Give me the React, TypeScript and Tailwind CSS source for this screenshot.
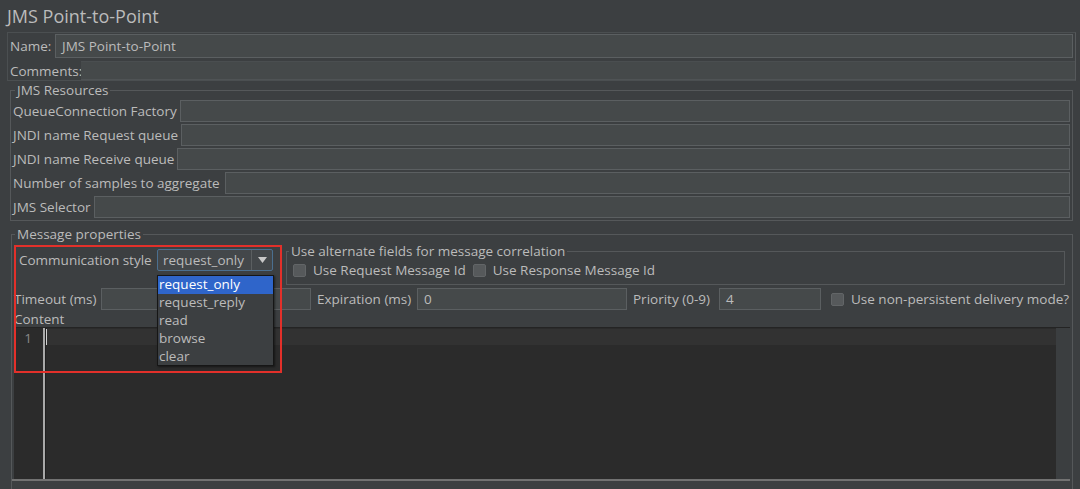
import React from 'react'

const Field = ({ value = '', className = '' }: { value?: string; className?: string }) => (
  <div className={`h-[22px] bg-[#45494a] border border-[#5b5f61] pl-[6px] flex items-center text-[#bbbbbb] ${className}`}>
    {value}
  </div>
)

const Check = ({ label, className = '' }: { label: string; className?: string }) => (
  <div className={`flex items-center ${className}`}>
    <div className="w-[13px] h-[13px] rounded-[2px] bg-[#56595b] border border-[#626567]" />
    <span className="ml-[7px]">{label}</span>
  </div>
)

const resources = [
  { label: 'QueueConnection Factory', w: 'w-[167px]' },
  { label: 'JNDI name Request queue', w: 'w-[168px]' },
  { label: 'JNDI name Receive queue', w: 'w-[164px]' },
  { label: 'Number of samples to aggregate', w: 'w-[212px]' },
  { label: 'JMS Selector', w: 'w-[81px]' },
]

const styles = ['request_only', 'request_reply', 'read', 'browse', 'clear']

export default function App() {
  return (
    <div className="relative w-[1080px] h-[489px] overflow-hidden bg-[#3c3f41] text-[#bbbbbb] text-[13.5px] leading-[16px] font-['Open_Sans',sans-serif]">
      <div className="h-[32px] pl-[7px] pt-[5px] text-[18px] leading-[22px]">JMS Point-to-Point</div>

      {/* name / comments */}
      <div className="ml-[7px] w-[1069px] h-[49px] border border-[#4b4f51] border-r-[#56595b]">
        <div className="flex items-center mt-[1px] pr-[2px]">
          <span className="w-[47px] pl-[2px]">Name:</span>
          <Field value="JMS Point-to-Point" className="flex-1 h-[24px]" />
        </div>
        <div className="flex items-center mt-[3px]">
          <span className="w-[73px] pl-[2px]">Comments:</span>
          <div className="flex-1 h-[19px] bg-[#45494a] border-t border-b border-t-[#4a4e50] border-b-[#4f5355]" />
        </div>
      </div>

      {/* JMS Resources */}
      <fieldset className="ml-[10px] mt-[1px] w-[1063px] border border-[#55585a] px-[2px] pb-[2px]">
        <legend className="ml-[2px] px-[2px] leading-[16px]">JMS Resources</legend>
        <div className="flex flex-col gap-[2px] mt-[2px]">
          {resources.map((r) => (
            <div key={r.label} className="flex items-center">
              <span className={`${r.w} whitespace-nowrap`}>{r.label}</span>
              <Field className="flex-1" />
            </div>
          ))}
        </div>
      </fieldset>

      {/* Message properties */}
      <fieldset className="ml-[11px] mt-[5px] w-[1062px] h-[300px] border border-[#55585a] px-0">
        <legend className="ml-[3px] px-[2px] leading-[16px]">Message properties</legend>
        <div className="flex h-[44px]">
          <div className="flex items-start pt-[7px] pl-[7px]">
            <span className="w-[138px] mt-[3px] whitespace-nowrap">Communication style</span>
            <div className="flex w-[116px] h-[22px] border border-[#4b6f8f] bg-[#43474a] rounded-[2px]">
              <span className="flex-1 pl-[5px] leading-[20px]">request_only</span>
              <div className="w-[21px] border-l border-[#5b5f61] flex items-center justify-center">
                <svg width="9" height="6" viewBox="0 0 9 6">
                  <path d="M0 0 L9 0 L4.5 6 Z" fill="#c8c8c8" />
                </svg>
              </div>
            </div>
          </div>
          <fieldset className="ml-[13px] mt-[1px] w-[779px] h-[42px] border border-[#55585a] px-[6px]">
            <legend className="-ml-[4px] px-[2px] leading-[16px] whitespace-nowrap">Use alternate fields for message correlation</legend>
            <div className="flex items-center mt-[3px] h-[16px] whitespace-nowrap">
              <Check label="Use Request Message Id" />
              <Check label="Use Response Message Id" className="ml-[7px]" />
            </div>
          </fieldset>
        </div>

        <div className="flex items-center mt-[2px] pl-[2px]">
          <span className="w-[87px] whitespace-nowrap">Timeout (ms)</span>
          <Field className="w-[210px]" />
          <span className="w-[106px] pl-[6px] whitespace-nowrap">Expiration (ms)</span>
          <Field value="0" className="w-[210px]" />
          <span className="w-[92px] pl-[6px] whitespace-nowrap">Priority (0-9)</span>
          <Field value="4" className="w-[102px]" />
          <Check label="Use non-persistent delivery mode?" className="ml-[10px] whitespace-nowrap" />
        </div>

        <div className="pl-[2px] h-[16px] leading-[16px] mt-[1px]">Content</div>

        <div className="ml-[2px] w-[1056px] h-[152px] bg-[#2b2b2b] border-t border-[#242424] flex">
          <div className="w-[29px] pt-[1px] flex flex-col items-end">
            <span className="pr-[11px] text-[#888888] leading-[16px] mt-[1px]">1</span>
          </div>
          <div className="w-[3px] flex">
            <div className="w-[2px] bg-[#a9a9a9]" />
            <div className="w-[1px] bg-[#1f1f1f]" />
          </div>
          <div className="flex-1 pt-[1px]">
            <div className="h-[16px] bg-[#323232] flex">
              <div className="w-[1px] bg-[#d0d0d0]" />
            </div>
          </div>
          <div className="w-[14px] bg-[#3b3e40]" />
        </div>
        <div className="w-[1058px] h-[2px] bg-[#727272]" />
      </fieldset>

      {/* dropdown popup */}
      <div className="absolute left-[157px] top-[275px] w-[117px] h-[91px] bg-[#3c3f41] border border-[#161616] shadow-[1px_1px_2px_rgba(0,0,0,0.5)]">
        {styles.map((s, i) => (
          <div
            key={s}
            className={`h-[18px] pl-[1px] leading-[17px] ${i === 0 ? 'bg-[#2f65ca] text-white' : ''}`}
          >
            {s}
          </div>
        ))}
      </div>

      {/* highlight */}
      <div className="absolute left-[14px] top-[245px] w-[268px] h-[128px] border-2 border-[#e3302a]" />
    </div>
  )
}
